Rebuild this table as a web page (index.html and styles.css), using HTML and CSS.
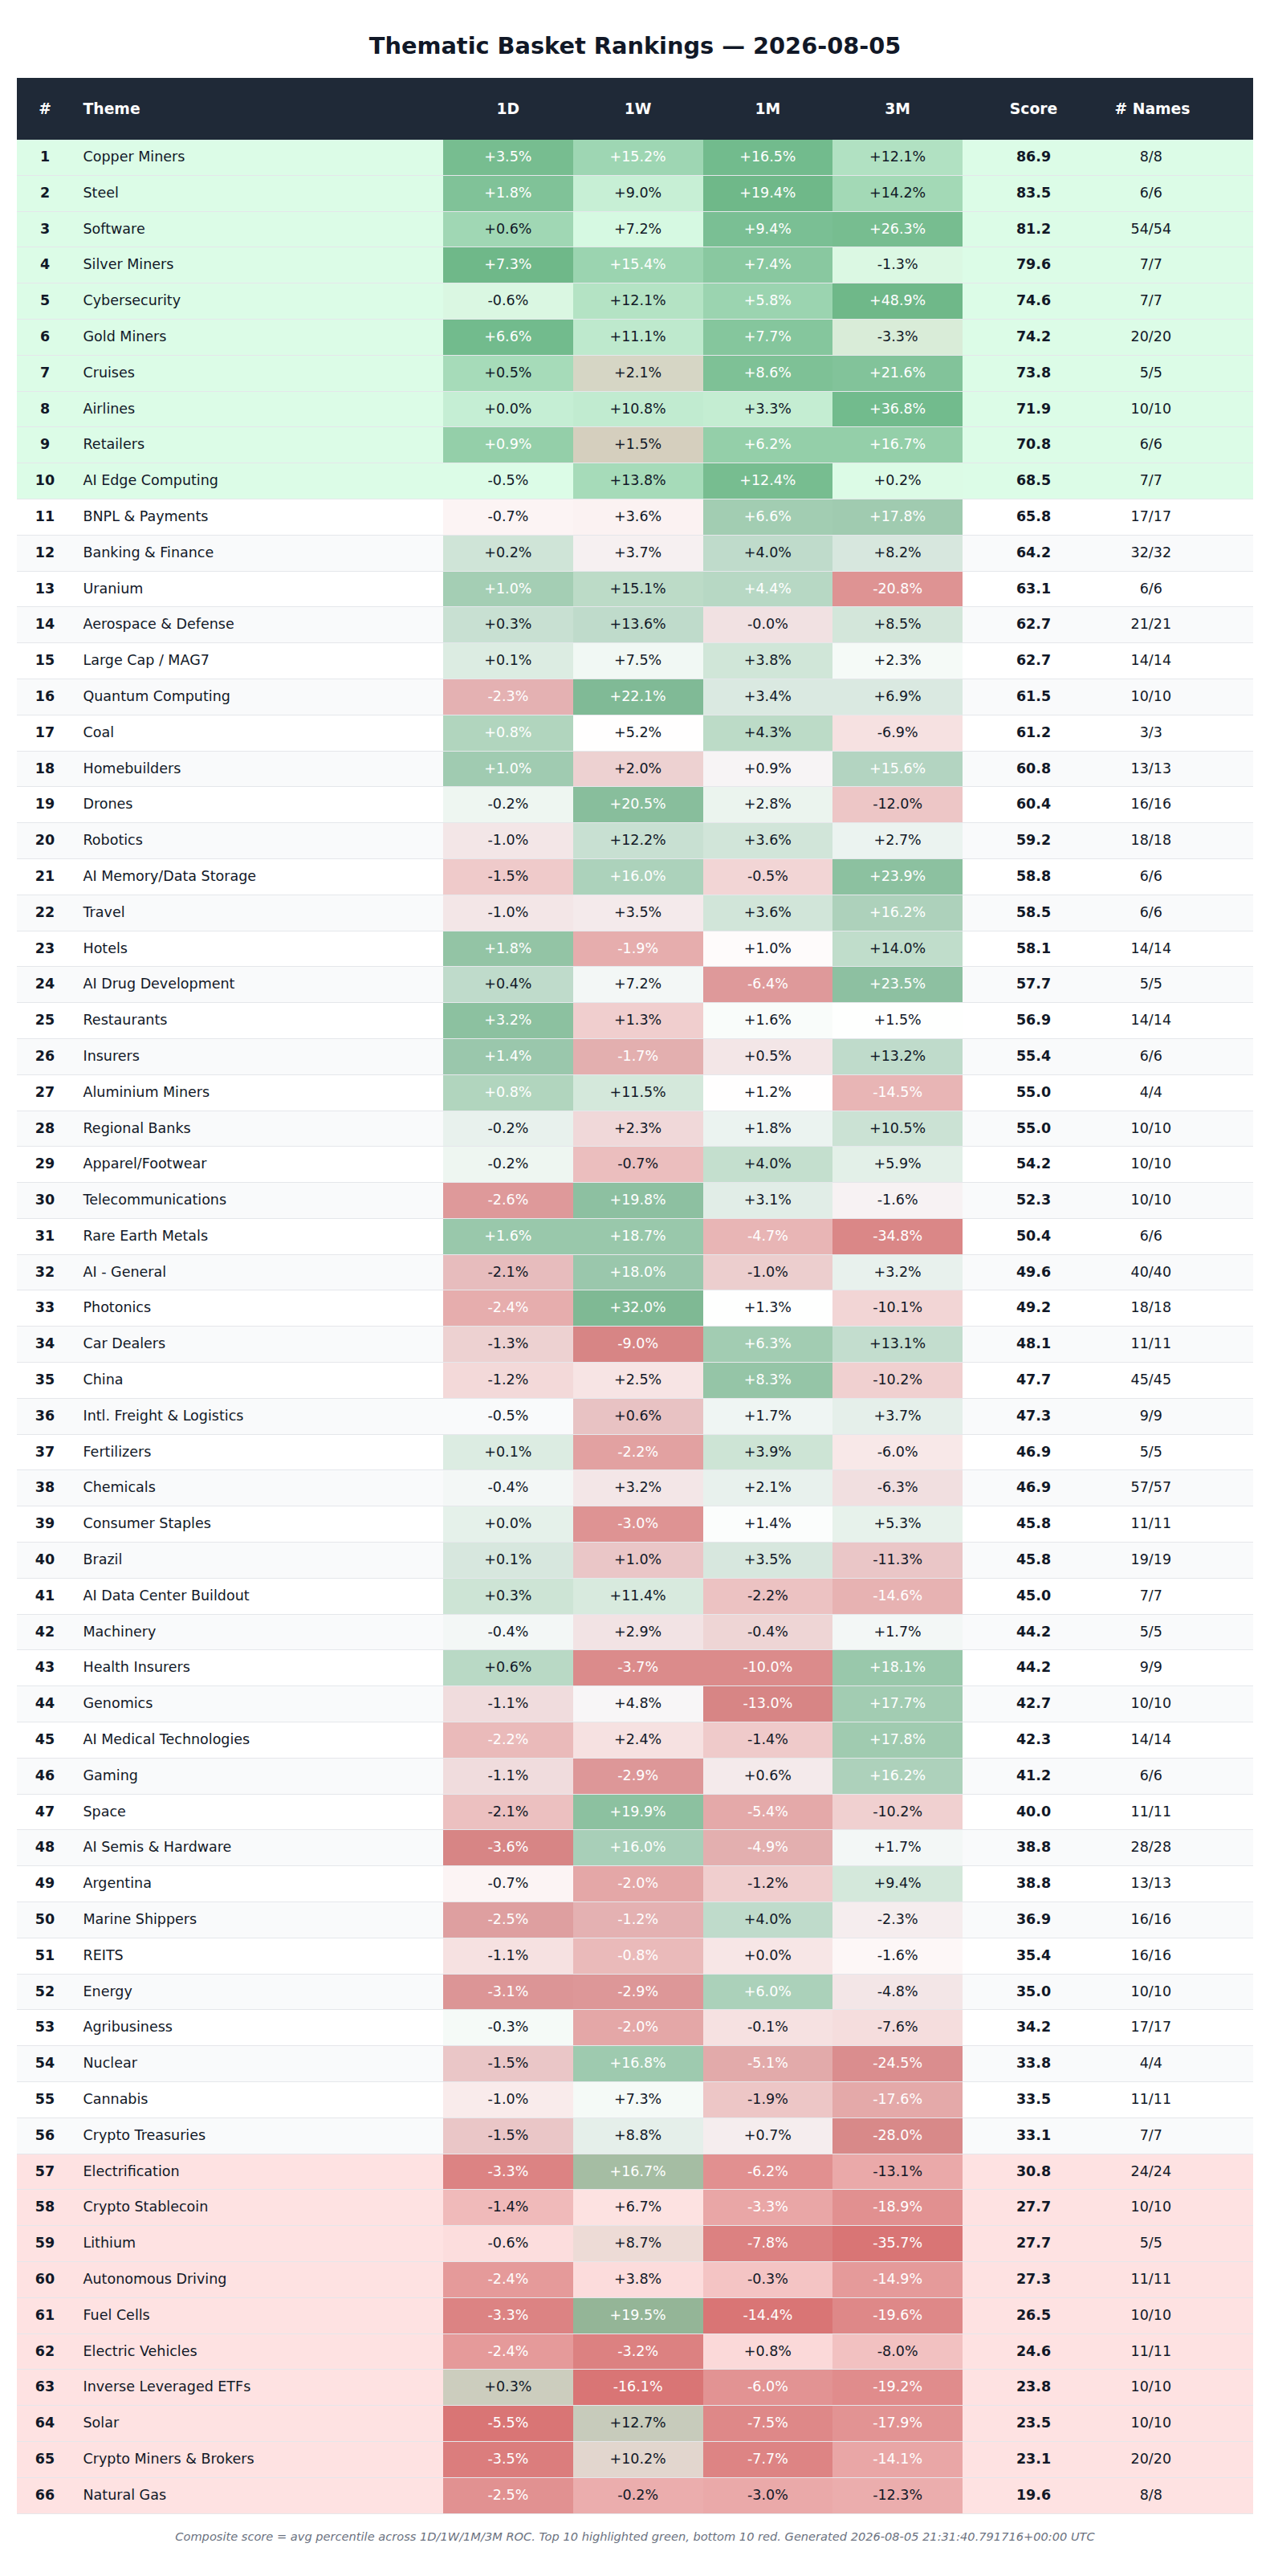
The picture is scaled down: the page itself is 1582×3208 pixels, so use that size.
FILE: index.html
```html
<!DOCTYPE html>
<html lang="en">
<head>
<meta charset="utf-8">
<title>Thematic Basket Rankings — 2026-08-05</title>
<link rel="stylesheet" href="styles.css">
</head>
<body>
<main class="page">
<h1 class="title">Thematic Basket Rankings — 2026-08-05</h1>
<table class="rank-table">
<colgroup>
<col class="c-rank"><col class="c-theme"><col class="c-num"><col class="c-num"><col class="c-num"><col class="c-num"><col class="c-score"><col class="c-names">
</colgroup>
<thead>
<tr><th class="rk">#</th><th class="th">Theme</th><th>1D</th><th>1W</th><th>1M</th><th>3M</th><th>Score</th><th class="nm"># Names</th></tr>
</thead>
<tbody>
<tr class="top"><td class="rk">1</td><td class="th">Copper Miners</td><td class="heat">+3.5%</td><td class="heat">+15.2%</td><td class="heat">+16.5%</td><td class="heat">+12.1%</td><td class="sc">86.9</td><td class="nm">8/8</td></tr>
<tr class="top"><td class="rk">2</td><td class="th">Steel</td><td class="heat">+1.8%</td><td class="heat">+9.0%</td><td class="heat">+19.4%</td><td class="heat">+14.2%</td><td class="sc">83.5</td><td class="nm">6/6</td></tr>
<tr class="top"><td class="rk">3</td><td class="th">Software</td><td class="heat">+0.6%</td><td class="heat">+7.2%</td><td class="heat">+9.4%</td><td class="heat">+26.3%</td><td class="sc">81.2</td><td class="nm">54/54</td></tr>
<tr class="top"><td class="rk">4</td><td class="th">Silver Miners</td><td class="heat">+7.3%</td><td class="heat">+15.4%</td><td class="heat">+7.4%</td><td class="heat">-1.3%</td><td class="sc">79.6</td><td class="nm">7/7</td></tr>
<tr class="top"><td class="rk">5</td><td class="th">Cybersecurity</td><td class="heat">-0.6%</td><td class="heat">+12.1%</td><td class="heat">+5.8%</td><td class="heat">+48.9%</td><td class="sc">74.6</td><td class="nm">7/7</td></tr>
<tr class="top"><td class="rk">6</td><td class="th">Gold Miners</td><td class="heat">+6.6%</td><td class="heat">+11.1%</td><td class="heat">+7.7%</td><td class="heat">-3.3%</td><td class="sc">74.2</td><td class="nm">20/20</td></tr>
<tr class="top"><td class="rk">7</td><td class="th">Cruises</td><td class="heat">+0.5%</td><td class="heat">+2.1%</td><td class="heat">+8.6%</td><td class="heat">+21.6%</td><td class="sc">73.8</td><td class="nm">5/5</td></tr>
<tr class="top"><td class="rk">8</td><td class="th">Airlines</td><td class="heat">+0.0%</td><td class="heat">+10.8%</td><td class="heat">+3.3%</td><td class="heat">+36.8%</td><td class="sc">71.9</td><td class="nm">10/10</td></tr>
<tr class="top"><td class="rk">9</td><td class="th">Retailers</td><td class="heat">+0.9%</td><td class="heat">+1.5%</td><td class="heat">+6.2%</td><td class="heat">+16.7%</td><td class="sc">70.8</td><td class="nm">6/6</td></tr>
<tr class="top"><td class="rk">10</td><td class="th">AI Edge Computing</td><td class="heat">-0.5%</td><td class="heat">+13.8%</td><td class="heat">+12.4%</td><td class="heat">+0.2%</td><td class="sc">68.5</td><td class="nm">7/7</td></tr>
<tr><td class="rk">11</td><td class="th">BNPL &amp; Payments</td><td class="heat">-0.7%</td><td class="heat">+3.6%</td><td class="heat">+6.6%</td><td class="heat">+17.8%</td><td class="sc">65.8</td><td class="nm">17/17</td></tr>
<tr><td class="rk">12</td><td class="th">Banking &amp; Finance</td><td class="heat">+0.2%</td><td class="heat">+3.7%</td><td class="heat">+4.0%</td><td class="heat">+8.2%</td><td class="sc">64.2</td><td class="nm">32/32</td></tr>
<tr><td class="rk">13</td><td class="th">Uranium</td><td class="heat">+1.0%</td><td class="heat">+15.1%</td><td class="heat">+4.4%</td><td class="heat">-20.8%</td><td class="sc">63.1</td><td class="nm">6/6</td></tr>
<tr><td class="rk">14</td><td class="th">Aerospace &amp; Defense</td><td class="heat">+0.3%</td><td class="heat">+13.6%</td><td class="heat">-0.0%</td><td class="heat">+8.5%</td><td class="sc">62.7</td><td class="nm">21/21</td></tr>
<tr><td class="rk">15</td><td class="th">Large Cap / MAG7</td><td class="heat">+0.1%</td><td class="heat">+7.5%</td><td class="heat">+3.8%</td><td class="heat">+2.3%</td><td class="sc">62.7</td><td class="nm">14/14</td></tr>
<tr><td class="rk">16</td><td class="th">Quantum Computing</td><td class="heat">-2.3%</td><td class="heat">+22.1%</td><td class="heat">+3.4%</td><td class="heat">+6.9%</td><td class="sc">61.5</td><td class="nm">10/10</td></tr>
<tr><td class="rk">17</td><td class="th">Coal</td><td class="heat">+0.8%</td><td class="heat">+5.2%</td><td class="heat">+4.3%</td><td class="heat">-6.9%</td><td class="sc">61.2</td><td class="nm">3/3</td></tr>
<tr><td class="rk">18</td><td class="th">Homebuilders</td><td class="heat">+1.0%</td><td class="heat">+2.0%</td><td class="heat">+0.9%</td><td class="heat">+15.6%</td><td class="sc">60.8</td><td class="nm">13/13</td></tr>
<tr><td class="rk">19</td><td class="th">Drones</td><td class="heat">-0.2%</td><td class="heat">+20.5%</td><td class="heat">+2.8%</td><td class="heat">-12.0%</td><td class="sc">60.4</td><td class="nm">16/16</td></tr>
<tr><td class="rk">20</td><td class="th">Robotics</td><td class="heat">-1.0%</td><td class="heat">+12.2%</td><td class="heat">+3.6%</td><td class="heat">+2.7%</td><td class="sc">59.2</td><td class="nm">18/18</td></tr>
<tr><td class="rk">21</td><td class="th">AI Memory/Data Storage</td><td class="heat">-1.5%</td><td class="heat">+16.0%</td><td class="heat">-0.5%</td><td class="heat">+23.9%</td><td class="sc">58.8</td><td class="nm">6/6</td></tr>
<tr><td class="rk">22</td><td class="th">Travel</td><td class="heat">-1.0%</td><td class="heat">+3.5%</td><td class="heat">+3.6%</td><td class="heat">+16.2%</td><td class="sc">58.5</td><td class="nm">6/6</td></tr>
<tr><td class="rk">23</td><td class="th">Hotels</td><td class="heat">+1.8%</td><td class="heat">-1.9%</td><td class="heat">+1.0%</td><td class="heat">+14.0%</td><td class="sc">58.1</td><td class="nm">14/14</td></tr>
<tr><td class="rk">24</td><td class="th">AI Drug Development</td><td class="heat">+0.4%</td><td class="heat">+7.2%</td><td class="heat">-6.4%</td><td class="heat">+23.5%</td><td class="sc">57.7</td><td class="nm">5/5</td></tr>
<tr><td class="rk">25</td><td class="th">Restaurants</td><td class="heat">+3.2%</td><td class="heat">+1.3%</td><td class="heat">+1.6%</td><td class="heat">+1.5%</td><td class="sc">56.9</td><td class="nm">14/14</td></tr>
<tr><td class="rk">26</td><td class="th">Insurers</td><td class="heat">+1.4%</td><td class="heat">-1.7%</td><td class="heat">+0.5%</td><td class="heat">+13.2%</td><td class="sc">55.4</td><td class="nm">6/6</td></tr>
<tr><td class="rk">27</td><td class="th">Aluminium Miners</td><td class="heat">+0.8%</td><td class="heat">+11.5%</td><td class="heat">+1.2%</td><td class="heat">-14.5%</td><td class="sc">55.0</td><td class="nm">4/4</td></tr>
<tr><td class="rk">28</td><td class="th">Regional Banks</td><td class="heat">-0.2%</td><td class="heat">+2.3%</td><td class="heat">+1.8%</td><td class="heat">+10.5%</td><td class="sc">55.0</td><td class="nm">10/10</td></tr>
<tr><td class="rk">29</td><td class="th">Apparel/Footwear</td><td class="heat">-0.2%</td><td class="heat">-0.7%</td><td class="heat">+4.0%</td><td class="heat">+5.9%</td><td class="sc">54.2</td><td class="nm">10/10</td></tr>
<tr><td class="rk">30</td><td class="th">Telecommunications</td><td class="heat">-2.6%</td><td class="heat">+19.8%</td><td class="heat">+3.1%</td><td class="heat">-1.6%</td><td class="sc">52.3</td><td class="nm">10/10</td></tr>
<tr><td class="rk">31</td><td class="th">Rare Earth Metals</td><td class="heat">+1.6%</td><td class="heat">+18.7%</td><td class="heat">-4.7%</td><td class="heat">-34.8%</td><td class="sc">50.4</td><td class="nm">6/6</td></tr>
<tr><td class="rk">32</td><td class="th">AI - General</td><td class="heat">-2.1%</td><td class="heat">+18.0%</td><td class="heat">-1.0%</td><td class="heat">+3.2%</td><td class="sc">49.6</td><td class="nm">40/40</td></tr>
<tr><td class="rk">33</td><td class="th">Photonics</td><td class="heat">-2.4%</td><td class="heat">+32.0%</td><td class="heat">+1.3%</td><td class="heat">-10.1%</td><td class="sc">49.2</td><td class="nm">18/18</td></tr>
<tr><td class="rk">34</td><td class="th">Car Dealers</td><td class="heat">-1.3%</td><td class="heat">-9.0%</td><td class="heat">+6.3%</td><td class="heat">+13.1%</td><td class="sc">48.1</td><td class="nm">11/11</td></tr>
<tr><td class="rk">35</td><td class="th">China</td><td class="heat">-1.2%</td><td class="heat">+2.5%</td><td class="heat">+8.3%</td><td class="heat">-10.2%</td><td class="sc">47.7</td><td class="nm">45/45</td></tr>
<tr><td class="rk">36</td><td class="th">Intl. Freight &amp; Logistics</td><td class="heat">-0.5%</td><td class="heat">+0.6%</td><td class="heat">+1.7%</td><td class="heat">+3.7%</td><td class="sc">47.3</td><td class="nm">9/9</td></tr>
<tr><td class="rk">37</td><td class="th">Fertilizers</td><td class="heat">+0.1%</td><td class="heat">-2.2%</td><td class="heat">+3.9%</td><td class="heat">-6.0%</td><td class="sc">46.9</td><td class="nm">5/5</td></tr>
<tr><td class="rk">38</td><td class="th">Chemicals</td><td class="heat">-0.4%</td><td class="heat">+3.2%</td><td class="heat">+2.1%</td><td class="heat">-6.3%</td><td class="sc">46.9</td><td class="nm">57/57</td></tr>
<tr><td class="rk">39</td><td class="th">Consumer Staples</td><td class="heat">+0.0%</td><td class="heat">-3.0%</td><td class="heat">+1.4%</td><td class="heat">+5.3%</td><td class="sc">45.8</td><td class="nm">11/11</td></tr>
<tr><td class="rk">40</td><td class="th">Brazil</td><td class="heat">+0.1%</td><td class="heat">+1.0%</td><td class="heat">+3.5%</td><td class="heat">-11.3%</td><td class="sc">45.8</td><td class="nm">19/19</td></tr>
<tr><td class="rk">41</td><td class="th">AI Data Center Buildout</td><td class="heat">+0.3%</td><td class="heat">+11.4%</td><td class="heat">-2.2%</td><td class="heat">-14.6%</td><td class="sc">45.0</td><td class="nm">7/7</td></tr>
<tr><td class="rk">42</td><td class="th">Machinery</td><td class="heat">-0.4%</td><td class="heat">+2.9%</td><td class="heat">-0.4%</td><td class="heat">+1.7%</td><td class="sc">44.2</td><td class="nm">5/5</td></tr>
<tr><td class="rk">43</td><td class="th">Health Insurers</td><td class="heat">+0.6%</td><td class="heat">-3.7%</td><td class="heat">-10.0%</td><td class="heat">+18.1%</td><td class="sc">44.2</td><td class="nm">9/9</td></tr>
<tr><td class="rk">44</td><td class="th">Genomics</td><td class="heat">-1.1%</td><td class="heat">+4.8%</td><td class="heat">-13.0%</td><td class="heat">+17.7%</td><td class="sc">42.7</td><td class="nm">10/10</td></tr>
<tr><td class="rk">45</td><td class="th">AI Medical Technologies</td><td class="heat">-2.2%</td><td class="heat">+2.4%</td><td class="heat">-1.4%</td><td class="heat">+17.8%</td><td class="sc">42.3</td><td class="nm">14/14</td></tr>
<tr><td class="rk">46</td><td class="th">Gaming</td><td class="heat">-1.1%</td><td class="heat">-2.9%</td><td class="heat">+0.6%</td><td class="heat">+16.2%</td><td class="sc">41.2</td><td class="nm">6/6</td></tr>
<tr><td class="rk">47</td><td class="th">Space</td><td class="heat">-2.1%</td><td class="heat">+19.9%</td><td class="heat">-5.4%</td><td class="heat">-10.2%</td><td class="sc">40.0</td><td class="nm">11/11</td></tr>
<tr><td class="rk">48</td><td class="th">AI Semis &amp; Hardware</td><td class="heat">-3.6%</td><td class="heat">+16.0%</td><td class="heat">-4.9%</td><td class="heat">+1.7%</td><td class="sc">38.8</td><td class="nm">28/28</td></tr>
<tr><td class="rk">49</td><td class="th">Argentina</td><td class="heat">-0.7%</td><td class="heat">-2.0%</td><td class="heat">-1.2%</td><td class="heat">+9.4%</td><td class="sc">38.8</td><td class="nm">13/13</td></tr>
<tr><td class="rk">50</td><td class="th">Marine Shippers</td><td class="heat">-2.5%</td><td class="heat">-1.2%</td><td class="heat">+4.0%</td><td class="heat">-2.3%</td><td class="sc">36.9</td><td class="nm">16/16</td></tr>
<tr><td class="rk">51</td><td class="th">REITS</td><td class="heat">-1.1%</td><td class="heat">-0.8%</td><td class="heat">+0.0%</td><td class="heat">-1.6%</td><td class="sc">35.4</td><td class="nm">16/16</td></tr>
<tr><td class="rk">52</td><td class="th">Energy</td><td class="heat">-3.1%</td><td class="heat">-2.9%</td><td class="heat">+6.0%</td><td class="heat">-4.8%</td><td class="sc">35.0</td><td class="nm">10/10</td></tr>
<tr><td class="rk">53</td><td class="th">Agribusiness</td><td class="heat">-0.3%</td><td class="heat">-2.0%</td><td class="heat">-0.1%</td><td class="heat">-7.6%</td><td class="sc">34.2</td><td class="nm">17/17</td></tr>
<tr><td class="rk">54</td><td class="th">Nuclear</td><td class="heat">-1.5%</td><td class="heat">+16.8%</td><td class="heat">-5.1%</td><td class="heat">-24.5%</td><td class="sc">33.8</td><td class="nm">4/4</td></tr>
<tr><td class="rk">55</td><td class="th">Cannabis</td><td class="heat">-1.0%</td><td class="heat">+7.3%</td><td class="heat">-1.9%</td><td class="heat">-17.6%</td><td class="sc">33.5</td><td class="nm">11/11</td></tr>
<tr><td class="rk">56</td><td class="th">Crypto Treasuries</td><td class="heat">-1.5%</td><td class="heat">+8.8%</td><td class="heat">+0.7%</td><td class="heat">-28.0%</td><td class="sc">33.1</td><td class="nm">7/7</td></tr>
<tr class="bottom"><td class="rk">57</td><td class="th">Electrification</td><td class="heat">-3.3%</td><td class="heat">+16.7%</td><td class="heat">-6.2%</td><td class="heat">-13.1%</td><td class="sc">30.8</td><td class="nm">24/24</td></tr>
<tr class="bottom"><td class="rk">58</td><td class="th">Crypto Stablecoin</td><td class="heat">-1.4%</td><td class="heat">+6.7%</td><td class="heat">-3.3%</td><td class="heat">-18.9%</td><td class="sc">27.7</td><td class="nm">10/10</td></tr>
<tr class="bottom"><td class="rk">59</td><td class="th">Lithium</td><td class="heat">-0.6%</td><td class="heat">+8.7%</td><td class="heat">-7.8%</td><td class="heat">-35.7%</td><td class="sc">27.7</td><td class="nm">5/5</td></tr>
<tr class="bottom"><td class="rk">60</td><td class="th">Autonomous Driving</td><td class="heat">-2.4%</td><td class="heat">+3.8%</td><td class="heat">-0.3%</td><td class="heat">-14.9%</td><td class="sc">27.3</td><td class="nm">11/11</td></tr>
<tr class="bottom"><td class="rk">61</td><td class="th">Fuel Cells</td><td class="heat">-3.3%</td><td class="heat">+19.5%</td><td class="heat">-14.4%</td><td class="heat">-19.6%</td><td class="sc">26.5</td><td class="nm">10/10</td></tr>
<tr class="bottom"><td class="rk">62</td><td class="th">Electric Vehicles</td><td class="heat">-2.4%</td><td class="heat">-3.2%</td><td class="heat">+0.8%</td><td class="heat">-8.0%</td><td class="sc">24.6</td><td class="nm">11/11</td></tr>
<tr class="bottom"><td class="rk">63</td><td class="th">Inverse Leveraged ETFs</td><td class="heat">+0.3%</td><td class="heat">-16.1%</td><td class="heat">-6.0%</td><td class="heat">-19.2%</td><td class="sc">23.8</td><td class="nm">10/10</td></tr>
<tr class="bottom"><td class="rk">64</td><td class="th">Solar</td><td class="heat">-5.5%</td><td class="heat">+12.7%</td><td class="heat">-7.5%</td><td class="heat">-17.9%</td><td class="sc">23.5</td><td class="nm">10/10</td></tr>
<tr class="bottom"><td class="rk">65</td><td class="th">Crypto Miners &amp; Brokers</td><td class="heat">-3.5%</td><td class="heat">+10.2%</td><td class="heat">-7.7%</td><td class="heat">-14.1%</td><td class="sc">23.1</td><td class="nm">20/20</td></tr>
<tr class="bottom"><td class="rk">66</td><td class="th">Natural Gas</td><td class="heat">-2.5%</td><td class="heat">-0.2%</td><td class="heat">-3.0%</td><td class="heat">-12.3%</td><td class="sc">19.6</td><td class="nm">8/8</td></tr>
</tbody>
</table>
<p class="note">Composite score = avg percentile across 1D/1W/1M/3M ROC. Top 10 highlighted green, bottom 10 red. Generated 2026-08-05 21:31:40.791716+00:00 UTC</p>
</main>
<script src="script.js"></script>
</body>
</html>
```
FILE: styles.css
```css
html, body {
  margin: 0;
  padding: 0;
  background: #ffffff;
}

body {
  font-family: "DejaVu Sans", "Liberation Sans", sans-serif;
  color: #111827;
}

.page {
  padding: 0 21px;
}

.title {
  margin: 40.6px 0 22.9px;
  font-size: 28.8px;
  line-height: 33.5px;
  font-weight: bold;
  text-align: center;
  color: #111827;
}

.rank-table {
  width: 100%;
  table-layout: fixed;
  border-collapse: separate;
  border-spacing: 0;
  font-size: 17.5px;
}

.c-rank { width: 70px; }
.c-theme { width: 461px; }
.c-num { width: 161.75px; }
.c-score { width: 177px; }
.c-names { width: 185px; }

.rank-table th {
  background: #1f2937;
  color: #ffffff;
  font-size: 18.75px;
  font-weight: bold;
  line-height: 77px;
  padding: 0 12.5px;
  text-align: center;
  white-space: nowrap;
}

.rank-table td {
  line-height: 43.8px;
  padding: 0 12.5px;
  border-bottom: 1px solid #e5e7eb;
  text-align: center;
  white-space: nowrap;
}

.rank-table tbody tr:nth-child(even) {
  background: #f9fafb;
}

.rank-table tbody tr.top {
  background: #dcfce7;
}

.rank-table tbody tr.bottom {
  background: #fee2e2;
}

.rank-table .th {
  text-align: left;
}

.rank-table .rk {
  font-weight: bold;
}

.rank-table .sc {
  font-weight: bold;
}

.rank-table .nm {
  padding-right: 81.9px;
}

.rank-table td.heat {
  color: #111827;
}

.rank-table td.heat.strong {
  color: #ffffff;
}

.note {
  margin: 19.5px 0 0;
  font-size: 14.6px;
  font-style: italic;
  color: #6b7280;
  text-align: center;
}
```
FILE: script.js
```js
(function () {
  var rows = Array.prototype.slice.call(document.querySelectorAll('.rank-table tbody tr'));
  var n = rows.length;
  for (var c = 0; c < 4; c++) {
    var cells = rows.map(function (r) { return r.querySelectorAll('td.heat')[c]; });
    var vals = cells.map(function (td) { return parseFloat(td.textContent); });
    cells.forEach(function (td, i) {
      var v = vals[i];
      var less = 0, eq = 0;
      vals.forEach(function (w) {
        if (w < v) less++;
        else if (w === v) eq++;
      });
      var rank = less + (eq + 1) / 2;
      var p = (rank - 1) / (n - 1);
      var d = Math.abs(2 * p - 1);
      var a = 0.55 * Math.pow(d, 1.15);
      var rgb = p >= 0.5 ? '21, 128, 61' : '185, 28, 28';
      td.style.backgroundColor = 'rgba(' + rgb + ', ' + a.toFixed(3) + ')';
      if (Math.abs(p - 0.5) >= 0.3 - 1e-9) td.classList.add('strong');
    });
  }
})();
```
